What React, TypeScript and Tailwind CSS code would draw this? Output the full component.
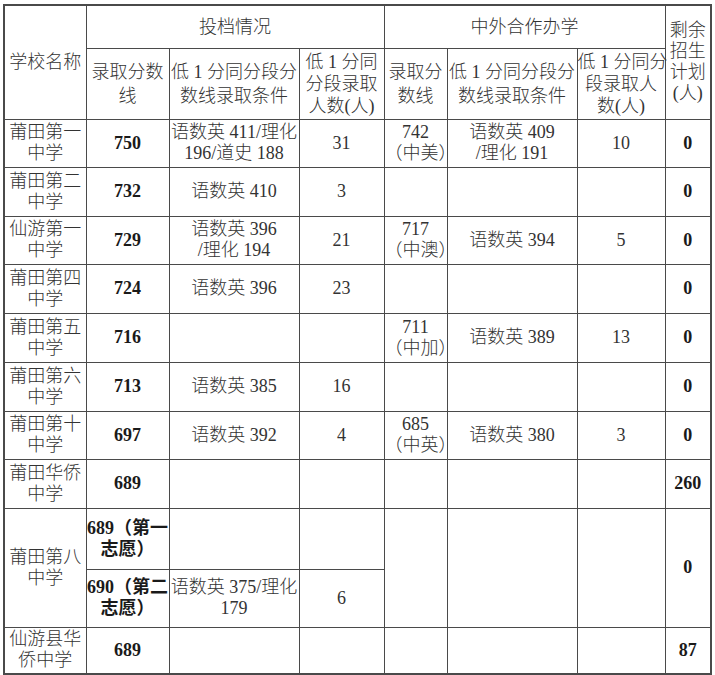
import React from "react";

type Cell = {
  lines: string[];
  bold?: boolean;
  rowSpan?: number;
  colSpan?: number;
};

const c = (text: string, opts: Partial<Cell> = {}): Cell => ({
  lines: text ? text.split("|") : [],
  ...opts,
});

const widths = [82, 83, 130, 85, 63, 130, 88, 46];

const bodyRows: { h: string; cells: Cell[] }[] = [
  {
    h: "h-[48px]",
    cells: [
      c("莆田第一|中学"),
      c("750", { bold: true }),
      c("语数英 411/理化|196/道史 188"),
      c("31"),
      c("742|（中美）"),
      c("语数英 409|/理化 191"),
      c("10"),
      c("0", { bold: true }),
    ],
  },
  {
    h: "h-[49px]",
    cells: [
      c("莆田第二|中学"),
      c("732", { bold: true }),
      c("语数英 410"),
      c("3"),
      c(""),
      c(""),
      c(""),
      c("0", { bold: true }),
    ],
  },
  {
    h: "h-[48px]",
    cells: [
      c("仙游第一|中学"),
      c("729", { bold: true }),
      c("语数英 396|/理化 194"),
      c("21"),
      c("717|（中澳）"),
      c("语数英 394"),
      c("5"),
      c("0", { bold: true }),
    ],
  },
  {
    h: "h-[49px]",
    cells: [
      c("莆田第四|中学"),
      c("724", { bold: true }),
      c("语数英 396"),
      c("23"),
      c(""),
      c(""),
      c(""),
      c("0", { bold: true }),
    ],
  },
  {
    h: "h-[49px]",
    cells: [
      c("莆田第五|中学"),
      c("716", { bold: true }),
      c(""),
      c(""),
      c("711|（中加）"),
      c("语数英 389"),
      c("13"),
      c("0", { bold: true }),
    ],
  },
  {
    h: "h-[49px]",
    cells: [
      c("莆田第六|中学"),
      c("713", { bold: true }),
      c("语数英 385"),
      c("16"),
      c(""),
      c(""),
      c(""),
      c("0", { bold: true }),
    ],
  },
  {
    h: "h-[48px]",
    cells: [
      c("莆田第十|中学"),
      c("697", { bold: true }),
      c("语数英 392"),
      c("4"),
      c("685|（中英）"),
      c("语数英 380"),
      c("3"),
      c("0", { bold: true }),
    ],
  },
  {
    h: "h-[49px]",
    cells: [
      c("莆田华侨|中学"),
      c("689", { bold: true }),
      c(""),
      c(""),
      c(""),
      c(""),
      c(""),
      c("260", { bold: true }),
    ],
  },
  {
    h: "h-[61px]",
    cells: [
      c("莆田第八|中学", { rowSpan: 2 }),
      c("689（第一|志愿）", { bold: true }),
      c(""),
      c(""),
      c("", { rowSpan: 2 }),
      c("", { rowSpan: 2 }),
      c("", { rowSpan: 2 }),
      c("0", { bold: true, rowSpan: 2 }),
    ],
  },
  {
    h: "h-[58px]",
    cells: [
      c("690（第二|志愿）", { bold: true }),
      c("语数英 375/理化|179"),
      c("6"),
    ],
  },
  {
    h: "h-[47px]",
    cells: [
      c("仙游县华|侨中学"),
      c("689", { bold: true }),
      c(""),
      c(""),
      c(""),
      c(""),
      c(""),
      c("87", { bold: true }),
    ],
  },
];

function Td({ cell, leading }: { cell: Cell; leading: string }) {
  return (
    <td
      rowSpan={cell.rowSpan}
      colSpan={cell.colSpan}
      className={`border border-[#4a4a4a] p-0 text-center align-middle ${leading} ${
        cell.bold ? "font-bold text-[#1a1a1a]" : "font-light"
      }`}
    >
      {cell.lines.map((line, i) => (
        <div key={i} className="whitespace-nowrap">
          {line}
        </div>
      ))}
    </td>
  );
}

export default function App() {
  return (
    <div className="bg-white w-[715px] h-[675px] pt-[4px] pl-[3px] font-['Liberation_Serif','Noto_Sans_CJK_SC',serif] text-[18px] text-[#333]">
      <table className="table-fixed border-collapse w-[708px] border-2 border-[#4a4a4a]">
        <colgroup>
          {widths.map((w, i) => (
            <col key={i} style={{ width: w }} />
          ))}
        </colgroup>
        <thead>
          <tr className="h-[43px]">
            <Td cell={c("学校名称", { rowSpan: 2 })} leading="leading-[22px]" />
            <Td cell={c("投档情况", { colSpan: 3 })} leading="leading-[22px]" />
            <Td cell={c("中外合作办学", { colSpan: 3 })} leading="leading-[22px]" />
            <Td cell={c("剩余|招生|计划|(人)", { rowSpan: 2 })} leading="leading-[21px]" />
          </tr>
          <tr className="h-[71px]">
            <Td cell={c("录取分数|线")} leading="leading-[24px]" />
            <Td cell={c("低 1 分同分段分|数线录取条件")} leading="leading-[24px]" />
            <Td cell={c("低 1 分同|分段录取|人数(人)")} leading="leading-[22px]" />
            <Td cell={c("录取分|数线")} leading="leading-[24px]" />
            <Td cell={c("低 1 分同分段分|数线录取条件")} leading="leading-[24px]" />
            <Td cell={c("低 1 分同分|段录取人|数(人)")} leading="leading-[22px]" />
          </tr>
        </thead>
        <tbody>
          {bodyRows.map((row, r) => (
            <tr key={r} className={row.h}>
              {row.cells.map((cell, i) => (
                <Td key={i} cell={cell} leading="leading-[21px]" />
              ))}
            </tr>
          ))}
        </tbody>
      </table>
    </div>
  );
}
